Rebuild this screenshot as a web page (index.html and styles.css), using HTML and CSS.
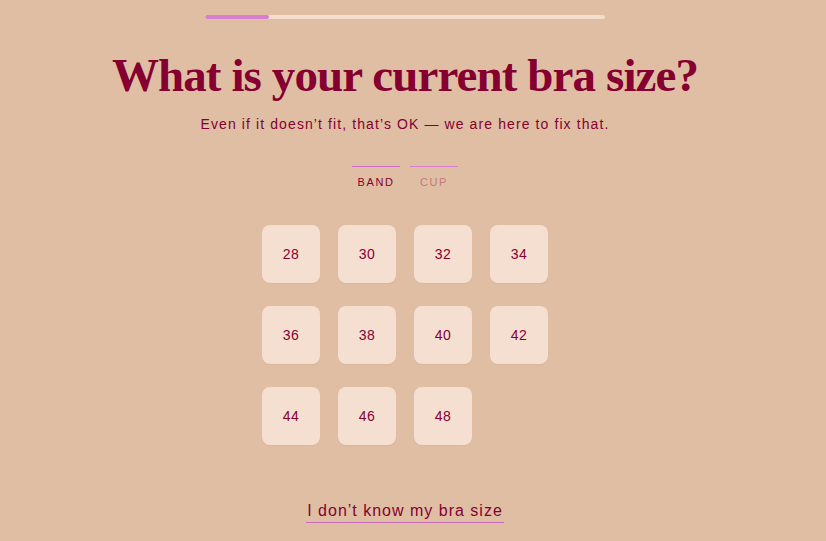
FILE: index.html
```html
<!DOCTYPE html>
<html>
<head>
<meta charset="utf-8">
<link rel="stylesheet" href="styles.css">
</head>
<body>
<main class="page">
  <div class="progress"><div class="progress-fill" style="width:16%"></div></div>
  <h1 class="title">What is your current bra size?</h1>
  <p class="subtitle">Even if it doesn’t fit, that’s OK — we are here to fix that.</p>
  <div class="tabs">
    <div class="tab tab-active">BAND</div>
    <div class="tab">CUP</div>
  </div>
  <div class="grid">
    <button class="size">28</button>
    <button class="size">30</button>
    <button class="size">32</button>
    <button class="size">34</button>
    <button class="size">36</button>
    <button class="size">38</button>
    <button class="size">40</button>
    <button class="size">42</button>
    <button class="size">44</button>
    <button class="size">46</button>
    <button class="size">48</button>
  </div>
  <a class="unknown" href="#">I don’t know my bra size</a>
</main>
</body>
</html>
```
FILE: styles.css
```css
html, body {
  margin: 0;
  padding: 0;
  background: #e0bea4;
  height: 100%;
  overflow: hidden;
}
body {
  font-family: "Liberation Sans", Arial, sans-serif;
  color: #850030;
}
.page {
  width: 810px;
  display: flex;
  flex-direction: column;
  align-items: center;
}
.progress {
  margin-top: 15px;
  width: 400px;
  height: 4px;
  border-radius: 2px;
  background: #f3ddcc;
  overflow: hidden;
}
.progress-fill {
  height: 100%;
  background: #d67fcf;
  border-radius: 2px;
}
.title {
  margin: 22px 0 0;
  font-family: "Liberation Serif", "Times New Roman", serif;
  font-weight: bold;
  font-size: 47px;
  line-height: 68px;
  letter-spacing: -0.9px;
  color: #850030;
}
.subtitle {
  margin: 6px 0 0;
  font-size: 14px;
  line-height: 18px;
  letter-spacing: 1.1px;
}
.tabs {
  margin-top: 33px;
  display: flex;
  gap: 10px;
}
.tab {
  width: 48px;
  border-top: 1px solid #d67fcf;
  padding-top: 9px;
  text-align: center;
  font-size: 11px;
  letter-spacing: 1.6px;
  color: #c27a7c;
}
.tab-active {
  color: #850030;
  border-top-color: #cf6bc6;
}
.grid {
  margin-top: 37px;
  display: grid;
  grid-template-columns: repeat(4, 58px);
  column-gap: 18px;
  row-gap: 23px;
}
.size {
  width: 58px;
  height: 58px;
  border: none;
  border-radius: 8px;
  background: #f4dfd0;
  color: #850030;
  font-family: "Liberation Sans", Arial, sans-serif;
  font-size: 14px;
  letter-spacing: 0.5px;
  padding: 0;
  box-shadow: 0 1px 1px rgba(150, 90, 60, 0.08);
}
.unknown {
  margin-top: 57px;
  font-size: 16px;
  color: #850030;
  text-decoration: none;
  border-bottom: 1px solid #c96bbd;
  padding: 0 1px 2px;
  letter-spacing: 1px;
}
```
